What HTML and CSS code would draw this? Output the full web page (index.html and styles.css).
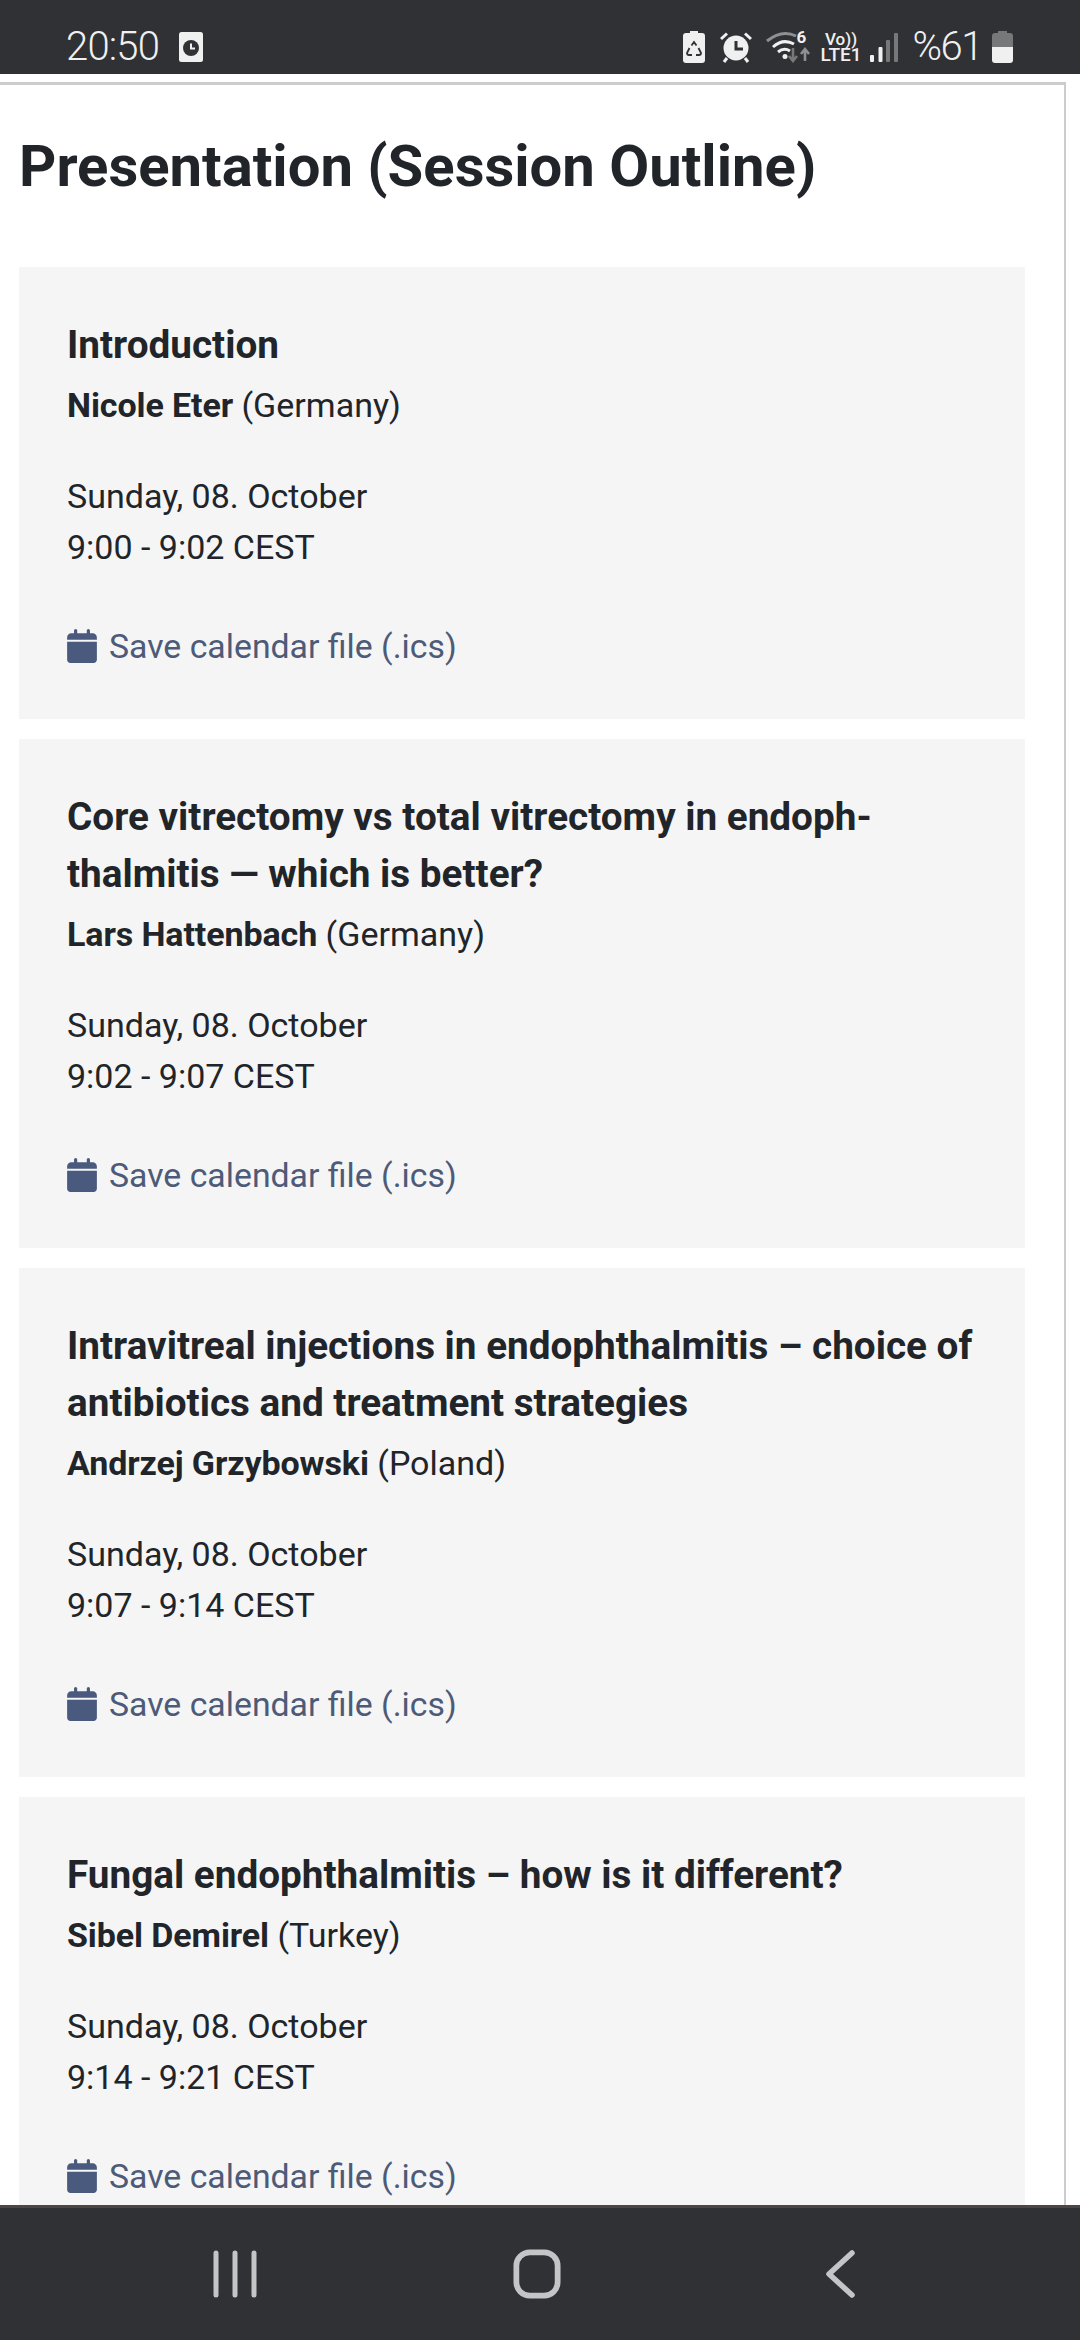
FILE: index.html
```html
<!DOCTYPE html>
<html lang="en">
<head>
<meta charset="utf-8">
<title>Presentation (Session Outline)</title>
<link rel="stylesheet" href="styles.css">
</head>
<body>
<div class="phone">
  <header class="status">
    <div class="status-left">
      <span class="time">20:50</span>
      <svg class="ic-clockbox" viewBox="0 0 24 30"><rect width="24" height="30" rx="2.5" fill="#f0f0f1"/><circle cx="12" cy="16" r="8" fill="#303135"/><path d="M12 11.5V16.5H16" fill="none" stroke="#f0f0f1" stroke-width="2"/></svg>
    </div>
    <div class="status-right">
      <svg class="ic-batsave" viewBox="0 0 22 32"><path d="M7 0H15V2H19Q22 2 22 5V29Q22 32 19 32H3Q0 32 0 29V5Q0 2 3 2H7Z" fill="#f0f0f1"/><path d="M8.5 14.5L11 11L13.5 14.5M15.5 17L18 22Q18 24 16 24H13M9 24H6Q4 24 4 22L6.5 17" fill="none" stroke="#303135" stroke-width="1.8"/></svg>
      <svg class="ic-alarm" viewBox="0 0 32 32"><circle cx="16" cy="17" r="12.5" fill="#f0f0f1"/><path d="M1 8L7 2.5M31 8L25 2.5M7 27L4 31M25 27L28 31" stroke="#f0f0f1" stroke-width="3" fill="none"/><path d="M16 10V18H23" fill="none" stroke="#303135" stroke-width="3"/></svg>
      <div class="wifi">
        <svg class="ic-wifi" viewBox="0 0 44 32"><path d="M1 10Q16 -2 30 5" fill="none" stroke="#8f9092" stroke-width="3"/><path d="M7 16Q17 7 28 13" fill="none" stroke="#f0f0f1" stroke-width="3"/><path d="M12 21Q18 16 24 20" fill="none" stroke="#f0f0f1" stroke-width="3"/><circle cx="19" cy="25.5" r="2.5" fill="#f0f0f1"/><path d="M27 17V30M23 25L27 30L31 25" fill="none" stroke="#77787a" stroke-width="2.6"/><path d="M39 30V18M35 23L39 18L43 23" fill="none" stroke="#8f9092" stroke-width="2.6"/></svg>
        <span class="wifi-6">6</span>
      </div>
      <div class="volte"><span class="vo">Vo))</span><span>LTE1</span></div>
      <svg class="ic-signal" viewBox="0 0 28 30"><rect x="0" y="23" width="4" height="7" rx="1" fill="#f0f0f1"/><rect x="8.5" y="15" width="4" height="15" rx="1" fill="#f0f0f1"/><rect x="16" y="8" width="4" height="22" rx="1" fill="#77787a"/><rect x="24" y="1" width="4" height="29" rx="1" fill="#77787a"/></svg>
      <span class="pct">%61</span>
      <svg class="ic-battery" viewBox="0 0 21 32"><path d="M6 0H15V2H18Q21 2 21 5V16H0V5Q0 2 3 2H6Z" fill="#77787a"/><path d="M0 16H21V29Q21 32 18 32H3Q0 32 0 29Z" fill="#f0f0f1"/></svg>
    </div>
  </header>

  <main class="viewport">
    <div class="sheet">
      <h1 class="page-title">Presentation (Session Outline)</h1>

      <article class="card">
        <h2 class="card-title">Introduction</h2>
        <p class="speaker"><strong>Nicole Eter</strong> (Germany)</p>
        <p class="when">Sunday, 08. October<br>9:00 - 9:02 CEST</p>
        <a class="save"><svg class="cal" viewBox="0 0 448 512"><path d="M152 24v40h144V24c0-13 11-24 24-24s24 11 24 24v40h40c36 0 64 28 64 64v32H0v-32c0-36 28-64 64-64h40V24c0-13 11-24 24-24s24 11 24 24zM448 192v272c0 26-22 48-48 48H48c-26 0-48-22-48-48V192z"/></svg>Save calendar file (.ics)</a>
      </article>

      <article class="card">
        <h2 class="card-title">Core vitrectomy vs total vitrectomy in endoph&shy;thalmitis — which is better?</h2>
        <p class="speaker"><strong>Lars Hattenbach</strong> (Germany)</p>
        <p class="when">Sunday, 08. October<br>9:02 - 9:07 CEST</p>
        <a class="save"><svg class="cal" viewBox="0 0 448 512"><path d="M152 24v40h144V24c0-13 11-24 24-24s24 11 24 24v40h40c36 0 64 28 64 64v32H0v-32c0-36 28-64 64-64h40V24c0-13 11-24 24-24s24 11 24 24zM448 192v272c0 26-22 48-48 48H48c-26 0-48-22-48-48V192z"/></svg>Save calendar file (.ics)</a>
      </article>

      <article class="card">
        <h2 class="card-title">Intravitreal injections in endophthalmitis – choice of antibiotics and treatment strategies</h2>
        <p class="speaker"><strong>Andrzej Grzybowski</strong> (Poland)</p>
        <p class="when">Sunday, 08. October<br>9:07 - 9:14 CEST</p>
        <a class="save"><svg class="cal" viewBox="0 0 448 512"><path d="M152 24v40h144V24c0-13 11-24 24-24s24 11 24 24v40h40c36 0 64 28 64 64v32H0v-32c0-36 28-64 64-64h40V24c0-13 11-24 24-24s24 11 24 24zM448 192v272c0 26-22 48-48 48H48c-26 0-48-22-48-48V192z"/></svg>Save calendar file (.ics)</a>
      </article>

      <article class="card">
        <h2 class="card-title">Fungal endophthalmitis – how is it different?</h2>
        <p class="speaker"><strong>Sibel Demirel</strong> (Turkey)</p>
        <p class="when">Sunday, 08. October<br>9:14 - 9:21 CEST</p>
        <a class="save"><svg class="cal" viewBox="0 0 448 512"><path d="M152 24v40h144V24c0-13 11-24 24-24s24 11 24 24v40h40c36 0 64 28 64 64v32H0v-32c0-36 28-64 64-64h40V24c0-13 11-24 24-24s24 11 24 24zM448 192v272c0 26-22 48-48 48H48c-26 0-48-22-48-48V192z"/></svg>Save calendar file (.ics)</a>
      </article>
    </div>
  </main>

  <nav class="navbar">
    <svg class="nav-recent" viewBox="0 0 44 48"><path d="M3 3V45M22 3V45M41 3V45" fill="none" stroke="#c4c5c6" stroke-width="5" stroke-linecap="round"/></svg>
    <svg class="nav-home" viewBox="0 0 50 52"><rect x="3.5" y="3.5" width="43" height="45" rx="14" fill="none" stroke="#c4c5c6" stroke-width="6"/></svg>
    <svg class="nav-back" viewBox="0 0 30 48"><path d="M27 3L4 24L27 45" fill="none" stroke="#c4c5c6" stroke-width="5.5" stroke-linecap="round" stroke-linejoin="round"/></svg>
  </nav>
</div>
</body>
</html>
```
FILE: styles.css
```css
* { box-sizing: border-box; }
html, body { margin: 0; padding: 0; }
body { background: #fff; font-family: Roboto, "Liberation Sans", sans-serif; color: #212529; }
.phone { width: 1080px; height: 2340px; display: flex; flex-direction: column; overflow: hidden; }

.status { height: 74px; flex: none; background: #303135; display: flex; justify-content: space-between; align-items: flex-end; padding: 0 67px 10px 66px; }
.status-left { display: flex; align-items: center; gap: 20px; }
.time { font-size: 40px; letter-spacing: -0.8px; line-height: 34px; color: #f0f0f1; font-weight: 300; }
.ic-clockbox { width: 24px; height: 30px; }
.status-right { display: flex; align-items: center; }
.ic-batsave { width: 22px; height: 32px; margin-right: 15px; }
.ic-alarm { width: 32px; height: 32px; margin-right: 14px; }
.wifi { position: relative; width: 44px; height: 32px; margin-right: 12px; }
.ic-wifi { display: block; width: 44px; height: 32px; }
.wifi-6 { position: absolute; left: 31px; top: -2px; font-size: 17px; line-height: 17px; font-weight: 700; color: #f0f0f1; }
.volte { display: flex; flex-direction: column; align-items: center; font-size: 19px; line-height: 15px; font-weight: 500; color: #f0f0f1; width: 39px; margin-right: 9px; }
.vo { font-size: 17px; }
.ic-signal { width: 28px; height: 30px; margin-right: 15px; }
.pct { font-size: 40px; letter-spacing: -1.5px; line-height: 34px; font-weight: 300; color: #f0f0f1; margin-right: 10px; }
.ic-battery { width: 21px; height: 32px; }

.viewport { flex: 1; min-height: 0; overflow: hidden; padding-top: 8px; }
.sheet { width: 1066px; border-top: 3px solid #ccc; border-right: 2px solid #ccc; padding: 0 39px 0 19px; }
.page-title { margin: 0 0 68px; padding-top: 49px; font-size: 58px; line-height: 65px; font-weight: 700; color: #212529; }

.card { background: #f5f5f6; padding: 49px 48px 47.5px; margin-bottom: 20px; }
.card-title { margin: 0; font-size: 38.7px; line-height: 57px; font-weight: 700; color: #212529; }
.speaker { margin: 6.5px 0 0; font-size: 34px; line-height: 51px; }
.speaker strong { font-weight: 700; letter-spacing: -0.1px; }
.when { margin: 40px 0 0; font-size: 34px; line-height: 51px; }
.save { margin-top: 48px; display: flex; align-items: center; gap: 12px; font-size: 33.8px; line-height: 51px; color: #4d5b78; }
.cal { width: 30px; height: 34px; fill: #4a5a7f; flex: none; }

.navbar { height: 135px; flex: none; background: #303135; border-top: 3px solid #4e4644; display: grid; grid-template-columns: 212px 46px 255px 48px 264px 30px; align-items: center; }
.nav-recent { grid-column: 2; width: 46px; height: 48px; }
.nav-home { grid-column: 4; width: 48px; height: 50px; }
.nav-back { grid-column: 6; width: 30px; height: 48px; }
```
